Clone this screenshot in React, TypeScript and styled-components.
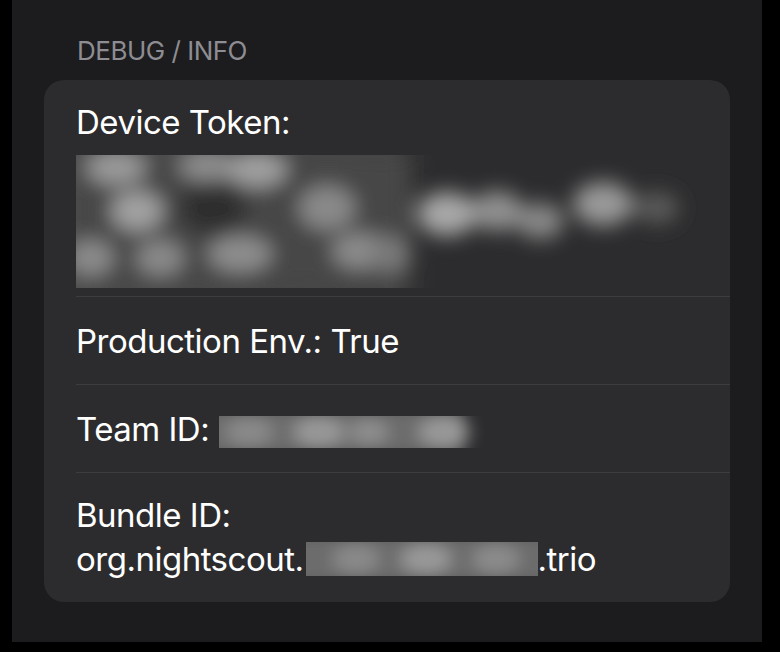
import React from "react";
import styled, { createGlobalStyle } from "styled-components";

const Global = createGlobalStyle`
  html, body { margin: 0; padding: 0; background: #000; }
  body { font-family: Inter, "Noto Sans", sans-serif; -webkit-font-smoothing: antialiased; }
`;

const Frame = styled.div`
  width: 780px;
  height: 652px;
  background: #000;
  display: flex;
  padding: 0 18px 10px 12px;
  box-sizing: border-box;
`;

const Screen = styled.div`
  flex: 1;
  background: #1c1c1e;
  padding: 0 32px;
  box-sizing: border-box;
`;

const SectionHeader = styled.div`
  padding: 36px 0 0 33px;
  height: 80px;
  box-sizing: border-box;
  font-size: 26px;
  line-height: 30px;
  color: #8d8d93;
  letter-spacing: -0.5px;
`;

const Card = styled.div`
  background: #2c2c2e;
  border-radius: 20px;
  overflow: hidden;
`;

const Row = styled.div<{ $pt: number; $pb: number; $last?: boolean }>`
  margin-left: 32px;
  padding: ${(p) => p.$pt}px 20px ${(p) => p.$pb}px 0;
  border-bottom: ${(p) => (p.$last ? "none" : "1px solid #3d3d41")};
  color: #fff;
  font-size: 33px;
  line-height: 44px;
  letter-spacing: -0.5px;
`;

const Line = styled.div`
  display: flex;
  align-items: flex-start;
  white-space: nowrap;
`;

const Redaction = styled.svg<{ $ml?: number; $mt?: number }>`
  display: block;
  flex-shrink: 0;
  margin-left: ${(p) => p.$ml ?? 0}px;
  margin-top: ${(p) => p.$mt ?? 0}px;
`;

type Blob = [number, number, number, number, string];

const tokenBlobs: Blob[] = [
  [40, 12, 30, 18, "#9a9a9a"],
  [131, 10, 28, 16, "#8e8e8e"],
  [181, 14, 30, 18, "#a0a0a0"],
  [61, 56, 26, 20, "#a2a2a2"],
  [137, 53, 34, 26, "#2e2e2e"],
  [251, 53, 28, 22, "#8a8a8a"],
  [14, 103, 24, 18, "#8c8c8c"],
  [84, 103, 24, 18, "#8a8a8a"],
  [164, 99, 32, 18, "#8e8e8e"],
  [284, 96, 28, 18, "#8c8c8c"],
  [371, 59, 30, 22, "#a8a8a8"],
  [421, 56, 26, 20, "#909090"],
  [464, 66, 24, 18, "#888"],
  [527, 49, 30, 22, "#999"],
  [581, 53, 22, 16, "#5a5a5a"],
  [314, 99, 20, 18, "#7a7a7a"],
];

function TokenBlur() {
  return (
    <Redaction width={630} height={133} $mt={11} viewBox="0 0 630 133">
      <defs>
        <filter id="tb" x="-20%" y="-40%" width="140%" height="180%">
          <feGaussianBlur stdDeviation="10" />
        </filter>
        <clipPath id="tc">
          <rect x="0" y="0" width="630" height="133" />
        </clipPath>
        <linearGradient id="tg" x1="0" x2="1" y1="0" y2="0">
          <stop offset="0" stopColor="#4c4c4c" />
          <stop offset="0.5" stopColor="#444" />
          <stop offset="0.58" stopColor="#2c2c2e" stopOpacity="0" />
        </linearGradient>
      </defs>
      <g clipPath="url(#tc)">
        <rect x="0" y="0" width="630" height="133" fill="url(#tg)" />
        <g filter="url(#tb)">
          <rect x="0" y="0" width="330" height="133" fill="#474747" />
          {tokenBlobs.map(([cx, cy, rx, ry, c], i) => (
            <ellipse key={i} cx={cx} cy={cy} rx={rx} ry={ry} fill={c} />
          ))}
        </g>
      </g>
    </Redaction>
  );
}

function InlineBlur({
  id,
  width,
  height,
  mt,
  ml,
  blobs,
  fade,
}: {
  id: string;
  width: number;
  height: number;
  mt: number;
  ml: number;
  blobs: Blob[];
  fade?: boolean;
}) {
  return (
    <Redaction width={width} height={height} $ml={ml} $mt={mt} viewBox={`0 0 ${width} ${height}`}>
      <defs>
        <filter id={`${id}f`} x="-20%" y="-60%" width="140%" height="220%">
          <feGaussianBlur stdDeviation="8" />
        </filter>
        <clipPath id={`${id}c`}>
          <rect x="0" y="0" width={width} height={height} />
        </clipPath>
      </defs>
      <g clipPath={`url(#${id}c)`}>
        <g filter={`url(#${id}f)`}>
          <rect
            x="-20"
            y="-10"
            width={fade ? width - 5 : width + 40}
            height={height + 20}
            fill="#6c6c6c"
          />
          {blobs.map(([cx, cy, rx, ry, c], i) => (
            <ellipse key={i} cx={cx} cy={cy} rx={rx} ry={ry} fill={c} />
          ))}
        </g>
      </g>
    </Redaction>
  );
}

const teamBlobs: Blob[] = [
  [30, 16, 24, 14, "#8a8a8a"],
  [100, 16, 26, 14, "#999"],
  [150, 16, 20, 12, "#8f8f8f"],
  [225, 16, 26, 14, "#9a9a9a"],
];

const bundleBlobs: Blob[] = [
  [50, 17, 24, 14, "#8a8a8a"],
  [120, 17, 26, 14, "#9a9a9a"],
  [190, 17, 24, 14, "#8c8c8c"],
];

export default function App() {
  return (
    <>
      <Global />
      <Frame>
        <Screen>
          <SectionHeader>DEBUG / INFO</SectionHeader>
          <Card>
            <Row $pt={20} $pb={8}>
              <Line>Device Token:</Line>
              <TokenBlur />
            </Row>
            <Row $pt={22} $pb={21}>
              <Line>Production Env.: True</Line>
            </Row>
            <Row $pt={22} $pb={21}>
              <Line>
                Team ID:
                <InlineBlur id="team" width={270} height={32} mt={9} ml={10} blobs={teamBlobs} fade />
              </Line>
            </Row>
            <Row $pt={20} $pb={21} $last>
              <Line>Bundle ID:</Line>
              <Line>
                org.nightscout.
                <InlineBlur id="bundle" width={232} height={34} mt={5} ml={2} blobs={bundleBlobs} />
                .trio
              </Line>
            </Row>
          </Card>
        </Screen>
      </Frame>
    </>
  );
}
